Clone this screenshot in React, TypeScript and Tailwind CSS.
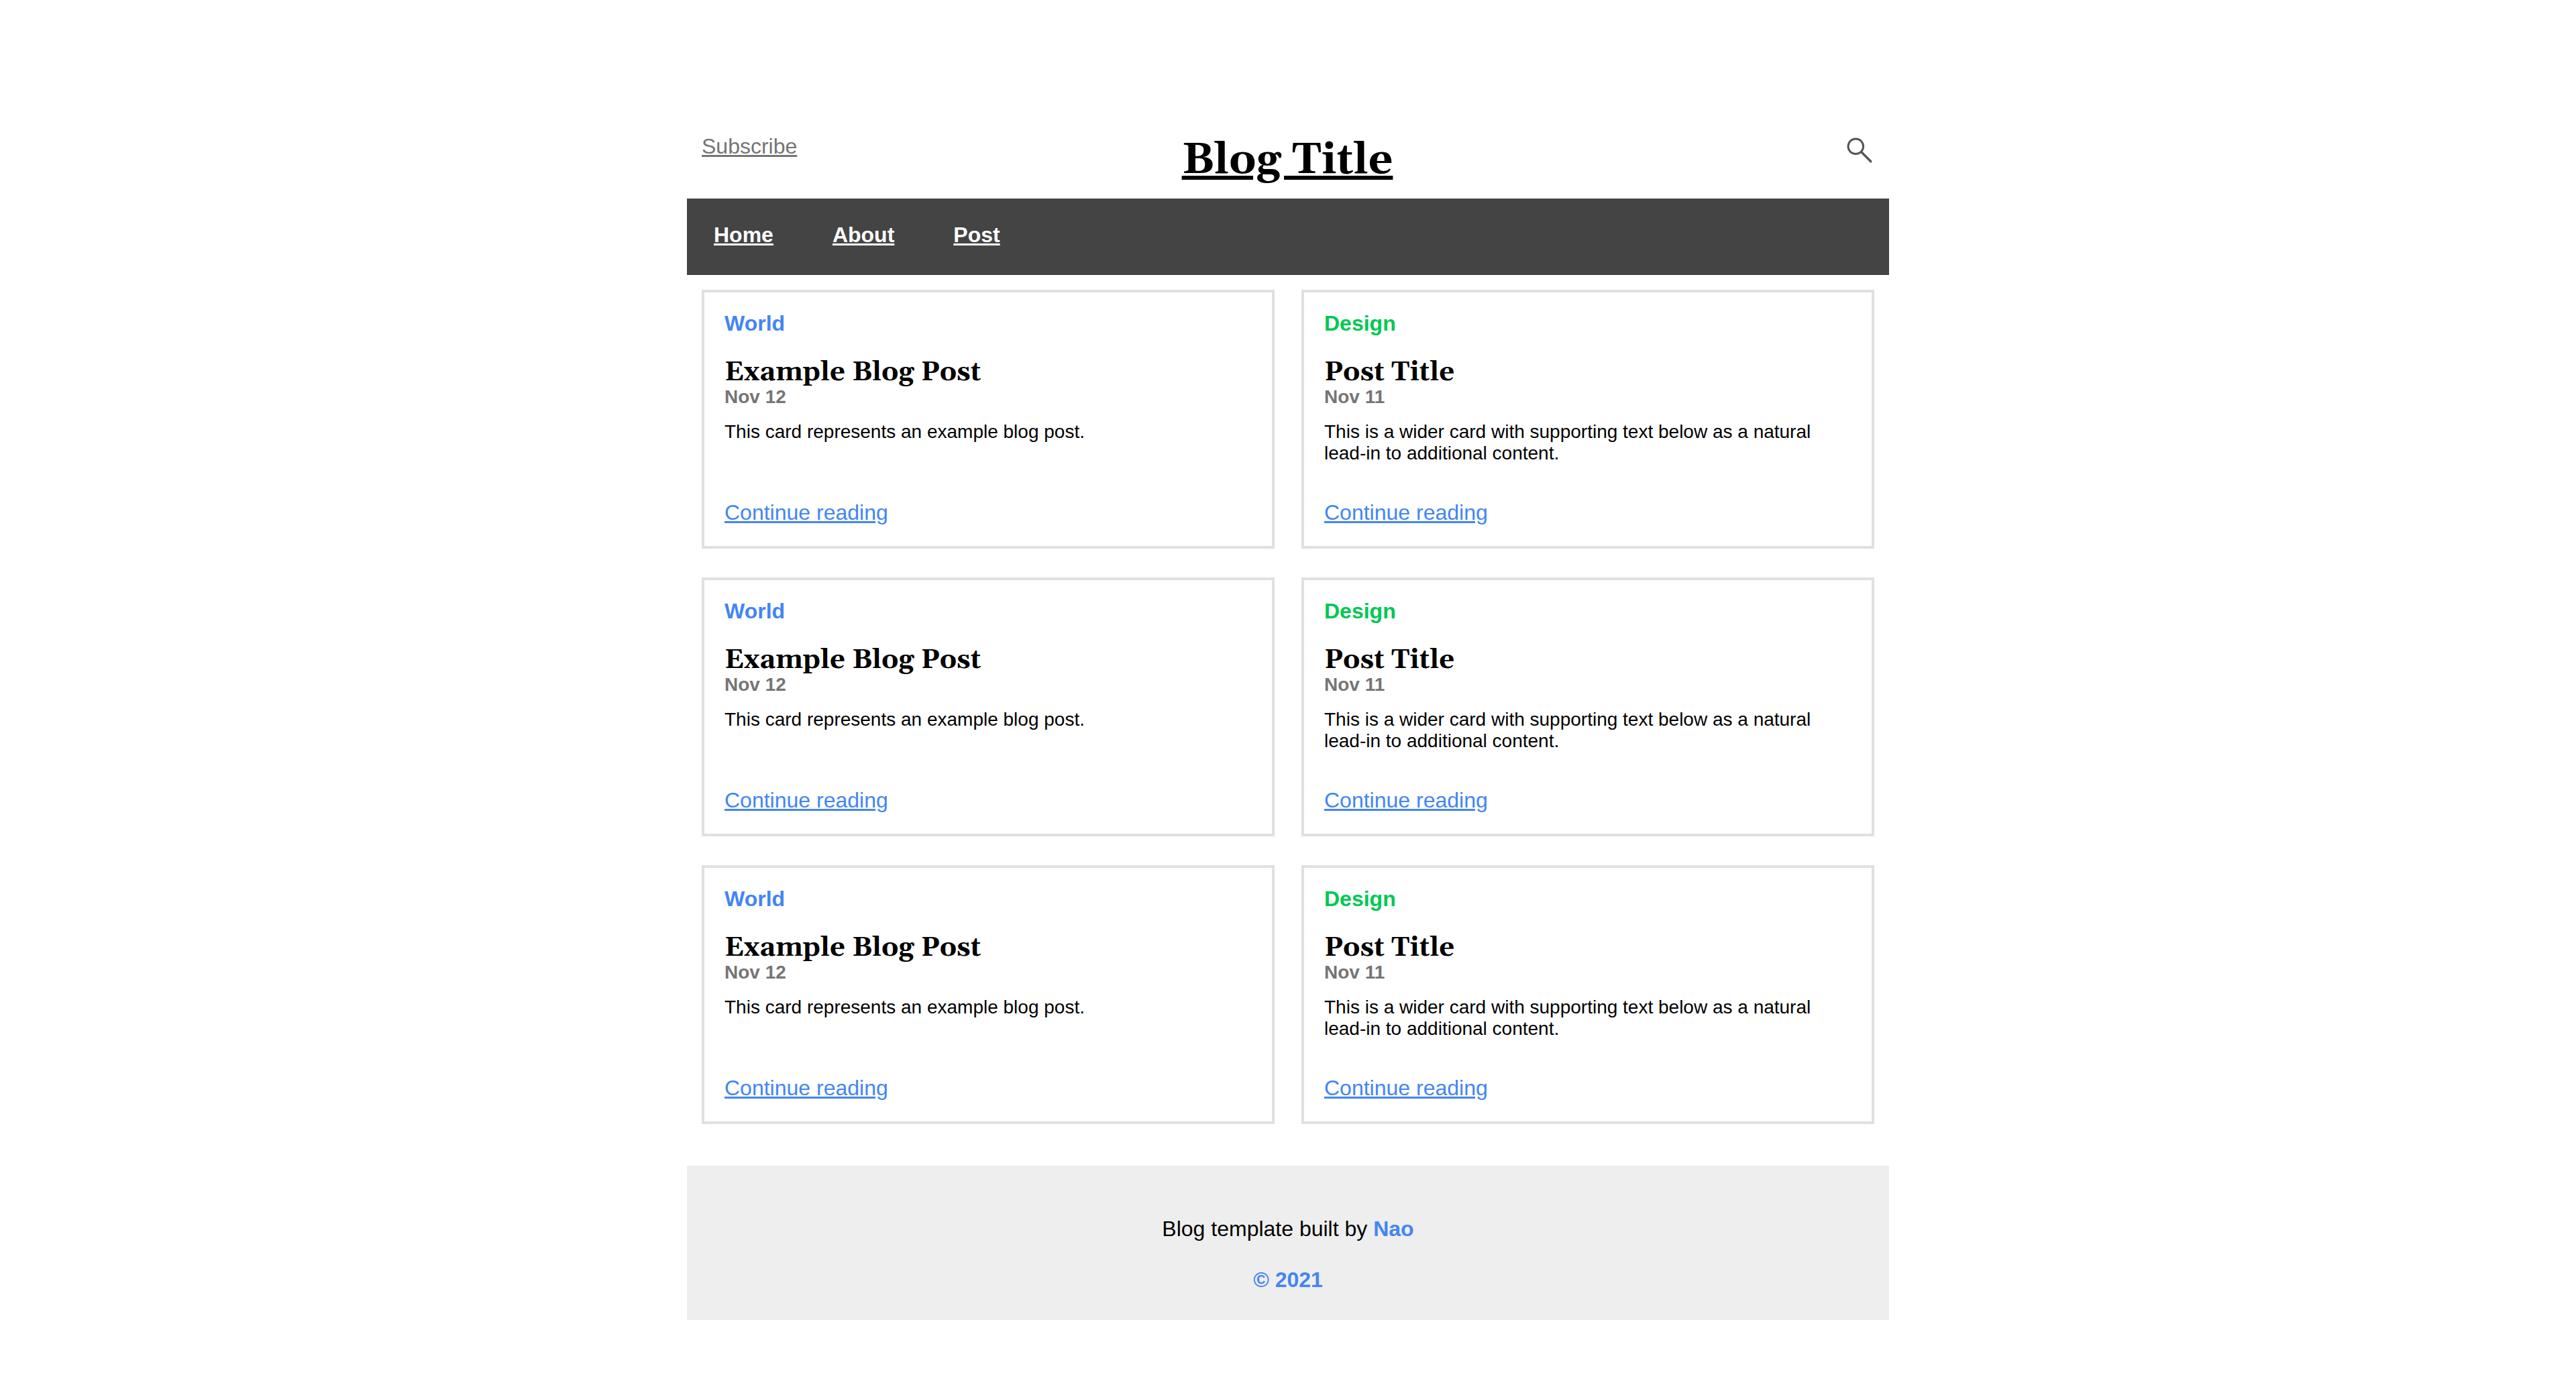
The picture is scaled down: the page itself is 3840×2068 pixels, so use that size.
type Post = {
  category: string;
  accent: string;
  title: string;
  date: string;
  text: string;
};

const world: Post = {
  category: 'World',
  accent: 'text-[#4285f4]',
  title: 'Example Blog Post',
  date: 'Nov 12',
  text: 'This card represents an example blog post.',
};

const design: Post = {
  category: 'Design',
  accent: 'text-[#00c853]',
  title: 'Post Title',
  date: 'Nov 11',
  text: 'This is a wider card with supporting text below as a natural lead-in to additional content.',
};

const posts: Post[] = [world, design, world, design, world, design];

function PostCard({ post }: { post: Post }) {
  return (
    <article className="flex flex-col border-4 border-[#e0e0e0] px-[30px] pt-7 pb-8">
      <strong className={`leading-9 ${post.accent}`}>{post.category}</strong>
      <h2 className="mt-9 font-[Georgia,Gelasio,'Liberation_Serif',serif] text-[40px] leading-10 font-bold">
        {post.title}
      </h2>
      <p className="text-[28px] leading-8 font-bold text-[#757575]">{post.date}</p>
      <p className="mt-5 mb-[54px] min-h-16 text-[28px] leading-8">{post.text}</p>
      <a href="#" className="mt-auto self-start leading-9 text-[#4285f4] underline">
        Continue reading
      </a>
    </article>
  );
}

function SearchIcon() {
  return (
    <svg
      viewBox="0 0 40 40"
      className="size-10"
      fill="none"
      stroke="#555555"
      strokeLinecap="round"
      aria-hidden="true"
    >
      <circle cx="14.3" cy="14.3" r="11.3" strokeWidth="3" />
      <path d="M22.8 22.8 36.8 36.8" strokeWidth="3.4" />
    </svg>
  );
}

export default function App() {
  return (
    <div className="min-h-screen bg-white pt-48 font-['Liberation_Sans',Arial,sans-serif] text-[32px] text-black">
      <div className="mx-auto max-w-[1792px]">
        <header className="grid h-[104px] grid-cols-3 items-start pr-6 pl-[22px]">
          <a href="#" className="mt-2 justify-self-start leading-9 text-[#757575] underline">
            Subscribe
          </a>
          <h1 className="mt-3 justify-self-center font-[Georgia,Gelasio,'Liberation_Serif',serif] text-[64px] leading-[72px] font-bold">
            <a href="#" className="underline">
              Blog Title
            </a>
          </h1>
          <button type="button" aria-label="Search" className="mt-3 cursor-pointer justify-self-end">
            <SearchIcon />
          </button>
        </header>

        <nav className="flex gap-[88px] bg-[#444444] px-10 pt-9 pb-[42px] font-bold text-white">
          <a href="#" className="leading-9 underline">Home</a>
          <a href="#" className="leading-9 underline">About</a>
          <a href="#" className="leading-9 underline">Post</a>
        </nav>

        <main className="grid grid-cols-2 gap-x-10 gap-y-[43px] px-[22px] pt-[22px] pb-[62px]">
          {posts.map((post, i) => (
            <PostCard key={i} post={post} />
          ))}
        </main>

        <footer className="flex flex-col items-center gap-10 bg-[#eeeeee] pt-[76px] pb-[42px] leading-9">
          <p>
            Blog template built by{' '}
            <a href="#" className="font-bold text-[#4285f4]">Nao</a>
          </p>
          <a href="#" className="font-bold text-[#4285f4]">© 2021</a>
        </footer>
      </div>
    </div>
  );
}
